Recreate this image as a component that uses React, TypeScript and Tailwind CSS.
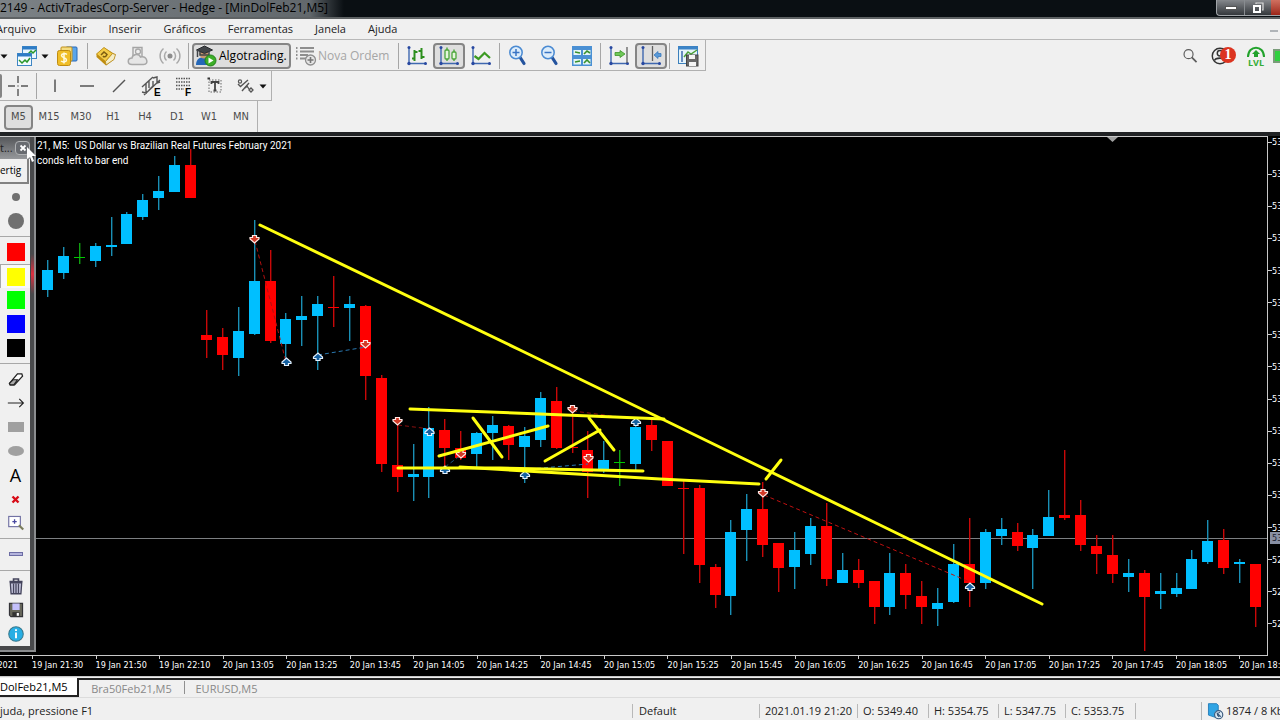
import type { ReactNode } from "react";

type Candle = [high: number, top: number, bottom: number, low: number, kind: "u" | "d" | "g"];

const FIRST_X = 48;
const STEP = 15.895;

const candles: Candle[] = [
  [260, 270, 290, 297, "u"], [247, 256, 273, 279, "u"], [243, 257, 258, 264, "g"], [243, 246, 261, 267, "u"],
  [217, 245, 247, 256, "u"], [212, 214, 244, 244, "u"], [194, 200, 217, 220, "u"], [176, 191, 198, 210, "u"],
  [156, 165, 192, 192, "u"], [149, 165, 198, 198, "d"], [310, 335, 340, 358, "d"], [328, 337, 355, 370, "d"],
  [307, 331, 358, 376, "u"], [220, 281, 334, 335, "u"], [250, 281, 341, 343, "d"], [313, 319, 344, 360, "u"],
  [296, 316, 320, 346, "u"], [296, 304, 316, 370, "u"], [276, 307, 308, 327, "d"], [296, 304, 308, 341, "u"],
  [305, 306, 376, 400, "d"], [375, 378, 464, 472, "d"], [420, 465, 477, 492, "d"], [444, 474, 477, 501, "u"],
  [407, 428, 477, 498, "u"], [419, 430, 448, 466, "d"], [431, 448, 458, 460, "d"], [432, 433, 454, 467, "u"],
  [416, 425, 433, 460, "u"], [425, 426, 445, 460, "d"], [427, 436, 447, 483, "u"], [392, 398, 440, 447, "u"],
  [387, 401, 448, 449, "d"], [408, 447, 448, 453, "d"], [431, 450, 472, 498, "d"], [441, 460, 471, 473, "u"],
  [450, 462, 463, 486, "g"], [421, 427, 464, 470, "u"], [420, 425, 440, 451, "d"], [441, 441, 486, 486, "d"],
  [480, 488, 489, 554, "d"], [485, 488, 565, 583, "d"], [564, 567, 595, 608, "d"], [520, 532, 596, 615, "u"],
  [494, 509, 530, 561, "u"], [482, 509, 545, 557, "d"], [543, 543, 568, 592, "d"], [532, 550, 567, 589, "u"],
  [518, 526, 554, 565, "u"], [503, 526, 579, 586, "d"], [553, 570, 583, 583, "u"], [559, 570, 583, 588, "d"],
  [581, 581, 607, 624, "d"], [553, 573, 607, 615, "u"], [564, 573, 595, 609, "d"], [581, 596, 607, 624, "d"],
  [588, 603, 609, 626, "u"], [544, 564, 602, 603, "u"], [518, 564, 583, 607, "d"], [529, 532, 583, 589, "u"],
  [518, 529, 536, 545, "u"], [523, 532, 546, 551, "d"], [529, 535, 548, 589, "u"], [490, 517, 536, 536, "u"],
  [450, 515, 518, 520, "d"], [500, 515, 545, 551, "d"], [535, 546, 554, 574, "d"], [535, 555, 574, 583, "d"],
  [559, 573, 577, 592, "u"], [570, 573, 597, 651, "d"], [573, 591, 594, 609, "u"], [573, 588, 594, 597, "u"],
  [550, 559, 589, 589, "u"], [520, 541, 562, 564, "u"], [529, 540, 568, 574, "d"], [559, 562, 564, 583, "u"],
  [564, 564, 607, 627, "d"],
];

const bodyColor = { u: "#00bfff", d: "#ff0000", g: "#00c800" };
const wickColor = { u: "#1a8fb5", d: "#c80808", g: "#10a010" };

const sells = [[254.5, 239], [365.5, 344], [397.5, 421], [461, 454], [572.5, 409], [588.5, 458], [763, 493]];
const buys = [[286.5, 362], [318, 357], [429.5, 432], [445, 470], [525, 475], [636, 422], [970, 587]];

const tradeLinks = [
  { d: "M255 241L286 362", c: "#b01010" },
  { d: "M318 355L366 347", c: "#2a78b0" },
  { d: "M398 425L430 429", c: "#8c1010" },
  { d: "M445 467L461 455", c: "#1c5580" },
  { d: "M530 469L588 464", c: "#2a78b0" },
  { d: "M573 411L636 419", c: "#8c1010" },
  { d: "M764 495L970 582", c: "#c01010" },
];

const strokes = [
  "M260 225L520 350L660 418L880 525L1042 604",
  "M410 409L540 414L664 419",
  "M398 468L500 468L643 471",
  "M460 467L560 473L660 479L759 484",
  "M473 418L502 457",
  "M439 456L548 426",
  "M545 461L600 430",
  "M589 418L614 450",
  "M766 479L781 460",
];

function ChartDrawing() {
  return (
    <svg className="block h-full w-full" role="img" aria-label="MinDolFeb21 M5">
      <g transform="translate(0,-137)">
        <path d="M0 538.5H3000" stroke="#7c7f82" />
        {candles.map(([high, top, bottom, low, kind], i) => {
          const x = Math.round(FIRST_X + i * STEP);
          return (
            <g key={i}>
              <rect x={x - 1} y={high} width={1.4} height={low - high} fill={wickColor[kind]} />
              <rect x={x - 6} y={top} width={11} height={Math.max(bottom - top, 1)} fill={bodyColor[kind]} />
            </g>
          );
        })}
        {tradeLinks.map((l) => (
          <path key={l.d} d={l.d} stroke={l.c} strokeDasharray="4 3" fill="none" />
        ))}
        {sells.map(([x, y]) => (
          <path key={x} transform={`translate(${x},${y})`} d="M-2-3.500H2V-1.500H4.500V0L0 4L-4.500 0V-1.500H-2Z" fill="#d23a28" stroke="#ffe8e4" strokeWidth="1.200" />
        ))}
        {buys.map(([x, y]) => (
          <path key={x} transform={`translate(${x},${y})`} d="M-2 3.500H2V1.500H4.500V0L0-4L-4.500 0V1.500H-2Z" fill="#1560a0" stroke="#e4f2ff" strokeWidth="1.200" />
        ))}
        {strokes.map((d) => (
          <path key={d} d={d} stroke="#ffff10" strokeWidth="3" strokeLinecap="round" fill="none" />
        ))}
        <path d="M1107 137H1118L1112.500 142Z" fill="#a0a0a0" />
      </g>
    </svg>
  );
}

const menus = ["Arquivo", "Exibir", "Inserir", "Gráficos", "Ferramentas", "Janela", "Ajuda"];
const frames = ["M15", "M30", "H1", "H4", "D1", "W1", "MN"];
const times = [
  "19 Jan 21:30", "19 Jan 21:50", "19 Jan 22:10", "20 Jan 13:05", "20 Jan 13:25", "20 Jan 13:45", "20 Jan 14:05",
  "20 Jan 14:25", "20 Jan 14:45", "20 Jan 15:05", "20 Jan 15:25", "20 Jan 15:45", "20 Jan 16:05", "20 Jan 16:25",
  "20 Jan 16:45", "20 Jan 17:05", "20 Jan 17:25", "20 Jan 17:45", "20 Jan 18:05", "20 Jan 18:25",
];
const prices = ["53", "53", "53", "53", "53", "53", "53", "53", "53", "53", "53", "53", "53", "52", "52", "52"];

function Icon({ children, size = 22 }: { children: ReactNode; size?: number }) {
  return (
    <svg width={size} height={size} viewBox="0 0 22 22" fill="none" className="shrink-0" aria-hidden="true">
      {children}
    </svg>
  );
}

function Tool({ label, pressed, narrow, children }: { label: string; pressed?: boolean; narrow?: boolean; children: ReactNode }) {
  return (
    <button
      aria-label={label}
      className={`flex h-[26px] shrink-0 items-center justify-center ${narrow ? "w-7" : "w-8"} ${
        pressed ? "rounded border-2 border-[#858585] bg-[#dedede]" : ""
      }`}
    >
      {children}
    </button>
  );
}

function Drop({ label }: { label: string }) {
  return (
    <button aria-label={label} className="flex h-[26px] w-2 shrink-0 items-center justify-center">
      <svg width="8" height="5" viewBox="0 0 8 5" className="shrink-0" aria-hidden="true">
        <path d="M0.500 0.500H7.500L4 4.500Z" fill="#111" />
      </svg>
    </button>
  );
}

function Sep() {
  return <div className="mx-[2px] h-[26px] w-px shrink-0 bg-[#a6a6a6]" />;
}

const axes = (
  <>
    <path d="M3 2.500V18.500H20" stroke="#3f68b0" strokeWidth="1.400" />
    <circle cx="3" cy="2.500" r="1.500" fill="#2848a0" />
    <circle cx="3" cy="18.500" r="1.700" fill="#2848a0" />
    <circle cx="19.500" cy="18.500" r="1.500" fill="#2848a0" />
  </>
);

function Magnifier({ plus }: { plus?: boolean }) {
  return (
    <Icon>
      <path d="M13.500 13L17 18.500" stroke="#24539e" strokeWidth="3.200" strokeLinecap="round" />
      <circle cx="9" cy="7.500" r="6.200" fill="#dcecfa" stroke="#4a8ad2" strokeWidth="1.500" />
      <path d={plus ? "M5.500 7.500H12.500M9 4V11" : "M5.500 7.500H12.500"} stroke="#3974c4" strokeWidth="1.500" />
    </Icon>
  );
}

function MainToolbar() {
  return (
    <div className="flex">
      <div className="flex h-[31px] items-center border-r border-b border-[#b0b0b0] pt-[2px] pr-px">
        <Drop label="Novo gráfico" />
        <div className="w-[5px]" />
        <Tool label="Janelas" narrow>
          <Icon>
            <rect x="6.500" y="1.500" width="14" height="12" fill="#eaf6ff" stroke="#3f86c4" />
            <path d="M6.500 3H20.500" stroke="#2e7cc6" strokeWidth="3" />
            <path d="M12 9L15 6L17 8L20 5" stroke="#28962a" strokeWidth="1.500" />
            <rect x="1.500" y="8.500" width="14" height="12" fill="#f2faff" stroke="#3f86c4" />
            <path d="M1.500 10H15.500" stroke="#2e7cc6" strokeWidth="3" />
            <path d="M3 15L6 18L9 15L11 17L14 13" stroke="#28962a" strokeWidth="1.500" />
          </Icon>
        </Tool>
        <Drop label="Mais janelas" />
        <div className="w-1" />
        <Tool label="Símbolos" narrow>
          <Icon>
            <rect x="10" y="2" width="11" height="14" rx="1" fill="#5aa5ea" stroke="#2868b8" />
            <rect x="5" y="2" width="11" height="14" rx="1" fill="#f4dc80" stroke="#c09018" />
            <rect x="1.500" y="5.500" width="13" height="15" rx="2" fill="#f0be28" stroke="#c08c10" />
            <path d="M11 9.500C9 8 5.500 8.500 5.500 10.500C5.500 13 10.500 12.500 10.500 15C10.500 17 7 17.500 5 16M8 7.500V18.500" stroke="#fffbe0" strokeWidth="1.500" />
          </Icon>
        </Tool>
        <div className="w-1" />
        <Sep />
        <Tool label="Linguagem">
          <Icon>
            <path d="M1.500 9L9 2.500L20.500 9.500L19 14.500L11 20.500L1.500 12Z" fill="#c08e10" />
            <path d="M1.500 9L9 2.500L17.500 8.500L10.500 16.500Z" fill="#f4cc48" stroke="#b88a18" strokeWidth=".8" />
            <path d="M10.500 16.500L17.500 8.500L20.500 9.500L19 14.500L11 20Z" fill="#f5edc8" stroke="#b88a18" strokeWidth=".8" />
            <path d="M6 10L9 7L12 9.500C11 12 9 12.500 8 11" stroke="#7c5c10" strokeWidth="1.500" />
          </Icon>
        </Tool>
        <Tool label="Nuvem">
          <Icon>
            <path d="M6 12V2.500H15V12" fill="#eee" stroke="#a4a4a4" strokeWidth="1.400" />
            <circle cx="11" cy="6.500" r="2.500" stroke="#a8a8a8" strokeWidth="1.300" />
            <path d="M5 19.500C0 19.500 0 13 5 13C5.500 9 12 8 13.500 12C20 10.500 22.500 19.500 16.500 19.500Z" fill="#e6e6e6" stroke="#a8a8a8" strokeWidth="1.500" />
          </Icon>
        </Tool>
        <Tool label="Sinais">
          <Icon>
            <circle cx="11" cy="11" r="2.500" fill="#8c8c8c" />
            <path d="M7.500 6.500A6 6 0 0 0 7.500 15.500M14.500 6.500A6 6 0 0 1 14.500 15.500M4.500 3.500A10 10 0 0 0 4.500 18.500M17.500 3.500A10 10 0 0 1 17.500 18.500" stroke="#a8a8a8" strokeWidth="1.500" />
          </Icon>
        </Tool>
        <Sep />
        <div className="w-px" />
        <button className="flex h-[26px] w-[99px] items-center gap-[2px] rounded border-2 border-[#858585] bg-[#dedede] pl-px text-xs text-black">
          <Icon>
            <path d="M1 20C1 14 5 12 9 12C14 12 18 14 18 20Z" fill="#2467b8" />
            <circle cx="9" cy="9" r="4.500" fill="#c89870" />
            <path d="M1.500 5L9.500 1L17.500 5L9.500 8.500Z" fill="#404448" stroke="#25282c" />
            <path d="M5 7V10H14V7M2.500 5V12" stroke="#404448" strokeWidth="1.500" />
            <circle cx="15.500" cy="15.500" r="5.500" fill="#3cae28" stroke="#208018" />
            <path d="M13.500 12.500L18.500 15.500L13.500 18.500Z" fill="#fff" />
          </Icon>
          Algotrading.
        </button>
        <button className="ml-1 flex h-[26px] w-[101px] items-center gap-px text-xs text-[#a6a6a6]">
          <Icon>
            <path d="M1 3H2.500M1 6.500H2.500M1 10H2.500M1 13.500H2.500M5 3H19M5 6.500H19M5 10H13M5 13.500H11" stroke="#8e8e8e" strokeWidth="2" />
            <circle cx="15.500" cy="15" r="5" fill="#e6e6e6" stroke="#8e8e8e" strokeWidth="1.300" />
            <path d="M12.500 15H18.500M15.500 12V18" stroke="#777" strokeWidth="1.600" />
          </Icon>
          <span className="whitespace-nowrap">Nova Ordem</span>
        </button>
        <Sep />
        <Tool label="Barras">
          <Icon>
            {axes}
            <path d="M8.500 5V16M6 13.500H8.500M8.500 7H11.500M15.500 3V14M12.500 6H15.500M15.500 12H18.500" stroke="#2c8f1c" strokeWidth="2" />
          </Icon>
        </Tool>
        <Tool label="Velas" pressed>
          <Icon>
            {axes}
            <path d="M9 2.500V16M16 4.500V16" stroke="#4ba63a" strokeWidth="1.400" />
            <rect x="7" y="5" width="4" height="9" rx="1" fill="#e4f6dc" stroke="#4ba63a" strokeWidth="1.300" />
            <rect x="14" y="7" width="4" height="7" rx="1" fill="#e4f6dc" stroke="#4ba63a" strokeWidth="1.300" />
          </Icon>
        </Tool>
        <Tool label="Linha">
          <Icon>
            {axes}
            <path d="M4.500 11L8.500 14L14.500 8L20 13" stroke="#3c9a22" strokeWidth="2.200" />
          </Icon>
        </Tool>
        <Sep />
        <Tool label="Ampliar"><Magnifier plus /></Tool>
        <Tool label="Reduzir"><Magnifier /></Tool>
        <Tool label="Lado a lado">
          <Icon>
            <rect x="1" y="1" width="20" height="20" fill="#4a90d4" />
            <path d="M2.500 5H10V10H2.500ZM12 5H19.500V10H12ZM2.500 14H10V19.500H2.500ZM12 14H19.500V19.500H12Z" fill="#e4f5f6" />
            <path d="M4 7L9 8M13 9L16 6L19 8M4 17L9 16M13 18L16 15L19 18" stroke="#38902c" strokeWidth="1.600" />
          </Icon>
        </Tool>
        <Sep />
        <Tool label="Rolagem automática">
          <Icon>
            {axes}
            <path d="M19 2V18" stroke="#606060" strokeWidth="1.300" />
            <path d="M7 7.500H12V5.500L17 9L12 12.500V10.500H7Z" fill="#6fc858" stroke="#3c9428" strokeWidth=".8" />
          </Icon>
        </Tool>
        <Tool label="Deslocar gráfico" pressed>
          <Icon>
            {axes}
            <path d="M12.500 1V16" stroke="#606060" strokeWidth="1.300" />
            <path d="M21 8.500H18V6.500L14 10L18 13.500V11.500H21Z" fill="#5a9ad8" stroke="#3978bc" strokeWidth=".8" />
          </Icon>
        </Tool>
        <Sep />
        <Tool label="Salvar modelo">
          <Icon>
            <rect x="1.500" y="1.500" width="19" height="17" fill="#e6f4fa" stroke="#3c80bc" />
            <path d="M1 3H21" stroke="#3c84c8" strokeWidth="3" />
            <path d="M5 6V17" stroke="#3060a8" strokeWidth="1.400" />
            <path d="M7 12L11 7L14 9L20 5" stroke="#4aa038" strokeWidth="1.500" />
            <rect x="9.500" y="10" width="11.500" height="11" fill="#686868" stroke="#444" />
            <path d="M12 10H18V14H12ZM12 17H19V21H12Z" fill="#f4f4f4" />
          </Icon>
        </Tool>
      </div>
      <div className="ml-auto flex h-[31px] items-center pt-px">
        <Tool label="Pesquisar" narrow>
          <Icon size={16}>
            <circle cx="9" cy="8.500" r="6.200" stroke="#5c5c5c" strokeWidth="1.600" />
            <path d="M13.500 13L20 19.500" stroke="#5c5c5c" strokeWidth="2.400" />
          </Icon>
        </Tool>
        <button aria-label="Conta" className="relative ml-[6px] flex h-[26px] w-[34px] items-center">
          <Icon size={20}>
            <circle cx="11" cy="11" r="8.500" stroke="#333" strokeWidth="1.600" />
            <circle cx="11" cy="8" r="3" stroke="#333" strokeWidth="1.600" />
            <path d="M5 16C6 12.500 16 12.500 17 16" stroke="#333" strokeWidth="1.800" />
          </Icon>
          <span className="absolute top-1 left-[10px] flex size-4 items-center justify-center rounded-full bg-[#dc3420] font-['Liberation_Serif',serif] text-sm leading-none font-bold text-white">1</span>
        </button>
        <button aria-label="Nível" className="flex h-[26px] w-6 flex-col items-center pt-[3px] text-[9px] leading-[9px] font-bold text-[#35ac35]">
          <svg width="20" height="12" viewBox="0 0 20 12" fill="none" className="shrink-0" aria-hidden="true">
            <path d="M2 11C2-1.500 18-1.500 18 11" stroke="#22a22c" strokeWidth="2" />
            <path d="M10 4L14 8H12V11H8V8H6Z" fill="#22a22c" />
          </svg>
          LVL
        </button>
        <div className="ml-[5px] h-[14px] w-[7px] border-2 border-r-0 border-[#7a9c7a] bg-[#30d040]" />
      </div>
    </div>
  );
}

function DrawToolbar() {
  return (
    <div className="flex">
      <div className="flex h-[30px] items-center border-r border-b border-[#b0b0b0] pt-px pr-1 font-['Liberation_Sans',sans-serif]">
        <div className="h-6 w-[2px] rounded-r bg-[#858585]" />
        <Tool label="Mira">
          <Icon>
            <path d="M11 1V8M11 14V21M1 11H8M14 11H21M10.500 11H11.500" stroke="#555" strokeWidth="1.400" />
          </Icon>
        </Tool>
        <Sep />
        <Tool label="Linha vertical"><Icon><path d="M11 4.500V17" stroke="#555" strokeWidth="1.500" /></Icon></Tool>
        <Tool label="Linha horizontal"><Icon><path d="M4 11H18" stroke="#555" strokeWidth="1.500" /></Icon></Tool>
        <Tool label="Linha de tendência"><Icon><path d="M5 17L17 5" stroke="#555" strokeWidth="1.500" /></Icon></Tool>
        <Tool label="Canal">
          <Icon>
            <path d="M2 12L13 2M4 20L20 5M2 17L6 18V14M6 8V14M9 6V13M9 15L13 11V6M13 3L17 2V8M17 8L20 7" stroke="#555" strokeWidth="1.400" />
            <text x="14" y="21" fontSize="10" fontWeight="700" fill="#000">E</text>
          </Icon>
        </Tool>
        <Tool label="Fibonacci">
          <Icon>
            <path d="M4 3.500H19M4 7H19M4 10.500H19M4 14H12" stroke="#555" strokeWidth="1.500" strokeDasharray="1.500 1" />
            <text x="13" y="21" fontSize="10" fontWeight="700" fill="#000">F</text>
          </Icon>
        </Tool>
        <Tool label="Texto">
          <Icon>
            <rect x="5" y="5" width="12" height="12" stroke="#666" strokeDasharray="1.500 1.500" />
            <path d="M3.500 3.500H6" stroke="#333" strokeWidth="2" />
            <path d="M7.500 9V7H14.500V9M11 7V15.500M9.500 15.500H12.500" stroke="#444" strokeWidth="1.800" />
          </Icon>
        </Tool>
        <Tool label="Objetos" narrow>
          <Icon>
            <path d="M4 9L6.500 11.500L14 5M8 16L15 8" stroke="#555" strokeWidth="1.400" />
            <circle cx="6" cy="6.500" r="1.600" stroke="#555" strokeWidth="1.200" />
            <path d="M11 13L13 11L15 14M15 15L17 13L19 15L17 17Z" stroke="#555" strokeWidth="1.300" />
          </Icon>
        </Tool>
        <Drop label="Mais objetos" />
      </div>
    </div>
  );
}

function PaletteRow({ label, selected, children }: { label: string; selected?: boolean; children: ReactNode }) {
  return (
    <button
      aria-label={label}
      className={`flex h-6 w-full items-center justify-center pl-px ${selected ? "border-t border-l border-[#a8a8a8] bg-[#f8f8f8]" : ""}`}
    >
      {children}
    </button>
  );
}

const swatches = [
  { name: "Vermelho", tone: "bg-[#ff0000]" },
  { name: "Amarelo", tone: "bg-[#ffff00]" },
  { name: "Verde", tone: "bg-[#00ff00]" },
  { name: "Azul", tone: "bg-[#0000ff]" },
  { name: "Preto", tone: "bg-black" },
];

function Palette() {
  return (
    <aside className="absolute top-px left-0 flex w-9 flex-col border-r-2 border-b-2 border-[#8a8c8e] bg-[#48494b] pr-1 pb-1 font-['Open_Sans',sans-serif]">
      <div className="flex h-[22px] items-center justify-between bg-linear-to-b from-[#55575a] to-[#96989b] text-[11px] text-[#222]">
        <span>t...</span>
        <button aria-label="Fechar" className="flex h-[14px] w-[15px] items-center justify-center rounded-sm border border-[#b0b2b4] bg-[#686b70]">
          <svg width="8" height="8" viewBox="0 0 8 8" aria-hidden="true"><path d="M1.500 1.500L6.500 6.500M6.500 1.500L1.500 6.500" stroke="#fff" strokeWidth="1.800" /></svg>
        </button>
      </div>
      <div className="bg-[#f0f0f0]">
        <button className="mb-px block h-[25px] w-[29px] border-r-2 border-b-2 border-[#828282] text-left text-[10px] text-black">ertig</button>
        <PaletteRow label="Ponta fina"><span className="size-2 rounded-full bg-[#707070]" /></PaletteRow>
        <PaletteRow label="Ponta grossa"><span className="size-4 rounded-full bg-[#707070]" /></PaletteRow>
        <div className="my-[3px] h-px bg-[#a8a8a8]" />
        {swatches.map((s) => (
          <PaletteRow key={s.name} label={s.name} selected={s.name === "Amarelo"}>
            <span className={`size-[18px] ${s.tone}`} />
          </PaletteRow>
        ))}
        <div className="my-[3px] h-px bg-[#a8a8a8]" />
        <PaletteRow label="Borracha">
          <Icon size={16}>
            <path d="M2 17L13 4H19L20 7L9 19H3Z" fill="#fff" stroke="#222" strokeWidth="1.800" />
            <path d="M2 17L7 12H13L8 19H3Z" fill="#aaa" stroke="#222" strokeWidth="1.600" />
          </Icon>
        </PaletteRow>
        <PaletteRow label="Seta">
          <Icon size={18}><path d="M1 11H20M15 6L20 11L15 16" stroke="#222" strokeWidth="1.400" /></Icon>
        </PaletteRow>
        <PaletteRow label="Retângulo"><span className="h-[10px] w-4 bg-[#a0a0a0]" /></PaletteRow>
        <PaletteRow label="Elipse"><span className="h-[10px] w-4 rounded-[50%] bg-[#a0a0a0]" /></PaletteRow>
        <PaletteRow label="Texto"><span className="text-lg leading-none text-black">A</span></PaletteRow>
        <PaletteRow label="Apagar">
          <svg width="9" height="9" viewBox="0 0 9 9" aria-hidden="true"><path d="M1.500 1.500L7.500 7.500M7.500 1.500L1.500 7.500" stroke="#d80c18" strokeWidth="2.400" /></svg>
        </PaletteRow>
        <PaletteRow label="Lupa">
          <Icon size={16}>
            <rect x="1" y="2" width="16" height="14" fill="#fff" stroke="#7272a4" strokeWidth="1.600" />
            <path d="M6 9H12M9 6V12" stroke="#4848a0" strokeWidth="1.800" />
            <path d="M15 14L21 20" stroke="#7a7c5c" strokeWidth="3" />
          </Icon>
        </PaletteRow>
        <div className="my-[3px] h-px bg-[#a8a8a8]" />
        <PaletteRow label="Espessura"><span className="h-1 w-[14px] border border-[#6c6ca4] bg-[#b4b4dc]" /></PaletteRow>
        <div className="mt-1 mb-[3px] h-px bg-[#a8a8a8]" />
        <PaletteRow label="Lixeira">
          <Icon size={18}>
            <path d="M3 5.500H19M8 5V2.500H14V5" stroke="#44445c" strokeWidth="2" />
            <path d="M4 7H18L17 20.500H5Z" fill="#c4c4dc" stroke="#44445c" strokeWidth="1.600" />
            <path d="M8 8V20M11 8V20M14 8V20" stroke="#44445c" strokeWidth="1.600" />
          </Icon>
        </PaletteRow>
        <PaletteRow label="Salvar">
          <Icon size={16}>
            <path d="M2 2H20V20H4L2 18Z" fill="#68685c" stroke="#333338" strokeWidth="1.600" />
            <path d="M6 2H16V11H6Z" fill="#c4c0fc" />
            <path d="M6 14H16V20H6Z" fill="#333" />
            <path d="M12 15H15V19H12Z" fill="#fff" />
          </Icon>
        </PaletteRow>
        <PaletteRow label="Informações">
          <Icon size={16}>
            <circle cx="11" cy="11" r="10" fill="#28aee4" stroke="#38788c" strokeWidth="1.400" />
            <path d="M11 9V17M11 4.500V7" stroke="#fff" strokeWidth="2.600" />
          </Icon>
        </PaletteRow>
      </div>
      <div className="absolute top-[117px] right-0 h-10 w-[3px] bg-linear-to-b from-transparent via-[#e03040] to-transparent" />
      <svg className="absolute top-[10px] left-[26px]" width="10" height="16" viewBox="0 0 10 16" aria-hidden="true">
        <path d="M1 0L10 9H6L8 14L6 15L4 10L1 12Z" fill="#fff" />
      </svg>
    </aside>
  );
}

export default function App() {
  return (
    <div className="flex h-screen flex-col overflow-hidden bg-[#f0f0f0] font-['Open_Sans',sans-serif] text-xs text-[#222]">
      <header className="flex h-[19px] shrink-0 items-start border-b-2 border-[#5e6264] bg-[#0a0f13]">
        <h1 className="h-[17px] bg-linear-to-r from-[#7c8286] via-[#62686c] via-90% to-[#0a0f13] pr-4 text-xs leading-4 font-normal whitespace-nowrap text-black">
          2149 - ActivTradesCorp-Server - Hedge - [MinDolFeb21,M5]
        </h1>
        <div className="ml-auto flex h-4 rounded-bl border-b border-l border-[#a0a4a8] bg-linear-to-b from-[#85888c] to-[#34383c]">
          <button aria-label="Minimizar" className="flex w-7 items-center justify-center border-r border-[#888c90]">
            <span className="h-[4px] w-3 border border-[#555] bg-white" />
          </button>
          <button aria-label="Restaurar" className="flex w-[26px] items-center justify-center">
            <svg width="12" height="12" viewBox="0 0 12 12" fill="none" aria-hidden="true">
              <path d="M4 2V1H11V8H10" stroke="#ddd" strokeWidth="1.200" />
              <rect x="2" y="4" width="6" height="6" stroke="#fff" strokeWidth="2" />
            </svg>
          </button>
          <button aria-label="Fechar" className="w-[9px] bg-linear-to-b from-[#d07060] to-[#9c2418]" />
        </div>
      </header>

      <nav className="flex h-[21px] shrink-0 items-center border-b border-[#b8b8b8]">
        <div className="-ml-[15px] flex text-[11px]">
          {menus.map((m) => (
            <button key={m} className="px-[11px]">{m}</button>
          ))}
        </div>
        <span className="mt-[3px] mr-[2px] ml-auto h-[2px] w-2 bg-[#b0b4b8]" />
      </nav>

      <MainToolbar />
      <DrawToolbar />
      <div className="flex shrink-0">
        <div className="flex h-[31px] items-center border-r border-[#b0b0b0] pt-[2px] pl-1 font-['DejaVu_Sans_Condensed','DejaVu_Sans',sans-serif] text-[11px] text-[#4c4c4c]">
          <button className="h-[25px] w-[29px] rounded border-2 border-[#858585] bg-[#dedede]">M5</button>
          {frames.map((f) => (
            <button key={f} className="h-[25px] w-8">{f}</button>
          ))}
        </div>
      </div>

      <main className="relative flex min-h-0 flex-1 flex-col border-t-4 border-[#202224] bg-black font-['DejaVu_Sans_Condensed','DejaVu_Sans',sans-serif] text-[9px] text-white">
        <div className="flex min-h-0 flex-1">
          <div className="relative min-w-0 flex-1 border-t border-r border-b border-[#c8c8c8]">
            <ChartDrawing />
            <div className="absolute top-px left-[37px] font-[Roboto,sans-serif] text-[10px] leading-[15px] whitespace-pre">
              <p>21, M5:  US Dollar vs Brazilian Real Futures February 2021</p>
              <p>conds left to bar end</p>
            </div>
          </div>
          <div className="relative flex w-3 flex-col justify-between overflow-hidden pb-[26px]">
            {prices.map((p, i) => (
              <div key={i} className="flex items-center leading-3">
                <span className="h-px w-1 shrink-0 bg-[#d0d0d0]" />
                {p}
              </div>
            ))}
            <span className="absolute top-[396px] left-[2px] bg-[#8890a4] pl-[2px] leading-3 text-[#1c2030]">53</span>
          </div>
        </div>
        <div className="flex h-5 shrink-0 overflow-hidden">
          <div className="flex w-8 shrink-0 justify-end pt-[3px] pr-[14px] leading-3">2021</div>
          <div className="-mr-[23px] grid flex-1 grid-cols-20">
            {times.map((t) => (
              <div key={t} className="min-w-0 leading-3 whitespace-nowrap">
                <div className="h-[3px] w-px bg-[#d0d0d0]" />
                {t}
              </div>
            ))}
          </div>
        </div>
        <Palette />
      </main>

      <div className="flex h-[22px] shrink-0 items-start border-t border-b border-t-[#c8c8c8] border-b-[#dcdcdc] pt-px text-[11px] text-[#888]">
        <div className="flex h-[19px] flex-1 border-t-2 border-[#222]">
          <button className="-mt-[2px] h-[19px] w-[79px] border-r-2 border-b-2 border-[#222] bg-white text-left leading-[17px] text-black">DolFeb21,M5</button>
          <button className="w-[105px] text-center leading-4">Bra50Feb21,M5</button>
          <span className="mt-px h-[13px] w-px bg-[#909090]" />
          <button className="w-[83px] text-center leading-4">EURUSD,M5</button>
        </div>
      </div>

      <footer className="flex h-[22px] shrink-0 items-center overflow-hidden pt-1 text-[11px] whitespace-nowrap">
        <div className="flex-1">juda, pressione F1</div>
        <div className="w-[127px] border-l border-[#b8b8b8] pl-[6px]">Default</div>
        <div className="w-[98px] border-l border-[#b8b8b8] pl-[5px]">2021.01.19 21:20</div>
        <div className="w-[71px] border-l border-[#b8b8b8] pl-[5px]">O: 5349.40</div>
        <div className="w-[70px] border-l border-[#b8b8b8] pl-[5px]">H: 5354.75</div>
        <div className="w-[67px] border-l border-[#b8b8b8] pl-[5px]">L: 5347.75</div>
        <div className="w-[70px] border-l border-[#b8b8b8] pl-[5px]">C: 5353.75</div>
        <div className="h-4 w-[66px] border-l border-[#b8b8b8]" />
        <div className="flex w-[79px] items-center gap-[2px] border-l border-[#b8b8b8] pl-1">
          <Icon size={18}>
            <path d="M3 2H13L15 4V17L12 19L3 16Z" fill="#30a4e4" stroke="#1874b4" />
            <circle cx="15.500" cy="15.500" r="5" fill="#dceaf4" stroke="#38587c" strokeWidth="1.400" />
            <path d="M13 13L18 18M17 12.500C13 14 13 16 16 18" stroke="#38587c" strokeWidth="1.400" />
          </Icon>
          1874 / 8 Kb
        </div>
      </footer>
    </div>
  );
}
